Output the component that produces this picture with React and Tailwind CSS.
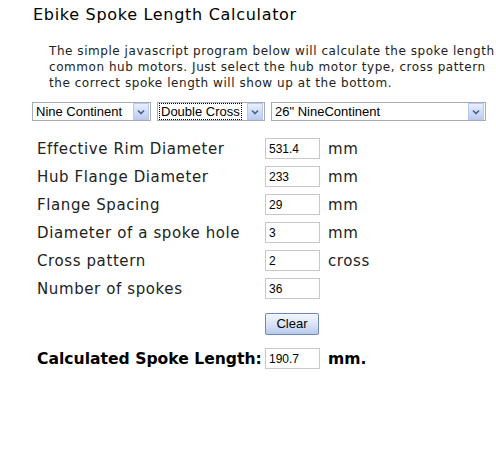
import React from "react";

function Arrow() {
  return (
    <div className="w-[16px] h-[17px] border border-[#b8c9f0] bg-gradient-to-b from-[#e8effd] to-[#bccdf2] flex items-center justify-center">
      <svg width="8" height="6" viewBox="0 0 8 6">
        <path d="M1 1.5 L4 4.5 L7 1.5" fill="none" stroke="#4d6185" strokeWidth="1.6" />
      </svg>
    </div>
  );
}

function Select({ text, width, focus }) {
  return (
    <div
      className="h-[19px] border border-[#a5acb5] bg-white flex items-center justify-between pl-[2px] pr-[1px]"
      style={{ width }}
    >
      <span
        className={
          "text-[13px] leading-[15px] text-black whitespace-nowrap px-[1px] " +
          (focus ? "outline outline-1 outline-dotted outline-black" : "")
        }
        style={{ fontFamily: '"Liberation Sans", Arial, sans-serif' }}
      >
        {text}
      </span>
      <Arrow />
    </div>
  );
}

function Field({ value }) {
  return (
    <div
      className="w-[55px] h-[21px] border border-[#c8c8c8] bg-white flex items-center pl-[3px] text-[12px] text-black"
      style={{ fontFamily: '"Liberation Sans", Arial, sans-serif' }}
    >
      {value}
    </div>
  );
}

const rows = [
  ["Effective Rim Diameter", "531.4", "mm"],
  ["Hub Flange Diameter", "233", "mm"],
  ["Flange Spacing", "29", "mm"],
  ["Diameter of a spoke hole", "3", "mm"],
  ["Cross pattern", "2", "cross"],
  ["Number of spokes", "36", ""],
];

export default function App() {
  return (
    <div
      className="w-[496px] h-[455px] bg-white overflow-hidden text-[#111]"
      style={{ fontFamily: '"DejaVu Sans", Verdana, sans-serif' }}
    >
      <div className="pt-[5px] pl-[33px] text-[16px] leading-[20px] tracking-[0.7px] whitespace-nowrap text-black">
        Ebike Spoke Length Calculator
      </div>
      <div className="mt-[18px] pl-[49px] text-[12px] leading-[16px] tracking-[0.55px] whitespace-nowrap text-[#222]">
        <div>The simple javascript program below will calculate the spoke length</div>
        <div>common hub motors. Just select the hub motor type, cross pattern</div>
        <div>the correct spoke length will show up at the bottom.</div>
      </div>
      <div className="mt-[11px] pl-[32px] flex gap-[6px]">
        <Select text="Nine Continent" width={119} />
        <Select text="Double Cross" width={108} focus />
        <Select text={'26" NineContinent'} width={215} />
      </div>
      <div className="mt-[17px] pl-[37px] grid grid-cols-[228px_63px_auto] gap-y-[7px] items-center">
        {rows.map(([label, val, unit]) => (
          <React.Fragment key={label}>
            <div className="h-[21px] pt-[1px] text-[15px] leading-[20px] tracking-[0.6px] whitespace-nowrap text-[#222]">{label}</div>
            <Field value={val} />
            <div className="h-[21px] pt-[1px] text-[15px] leading-[20px] tracking-[0.6px] text-[#222]">{unit}</div>
          </React.Fragment>
        ))}
        <div />
        <div className="mt-[7px]">
          <div
            className="w-[54px] h-[22px] rounded-[2px] border border-[#6d88b5] bg-gradient-to-b from-[#f4f7fd] via-[#dbe5f7] to-[#b7c9ea] flex items-center justify-center text-[13px] text-black"
            style={{ fontFamily: '"Liberation Sans", Arial, sans-serif' }}
          >
            Clear
          </div>
        </div>
        <div />
        <div className="mt-[6px] h-[21px] pt-[1px] text-[15.6px] leading-[20px] font-bold whitespace-nowrap text-black">
          Calculated Spoke Length:
        </div>
        <div className="mt-[6px]">
          <Field value="190.7" />
        </div>
        <div className="mt-[6px] h-[21px] pt-[1px] text-[15.6px] leading-[20px] font-bold text-black">mm.</div>
      </div>
    </div>
  );
}
